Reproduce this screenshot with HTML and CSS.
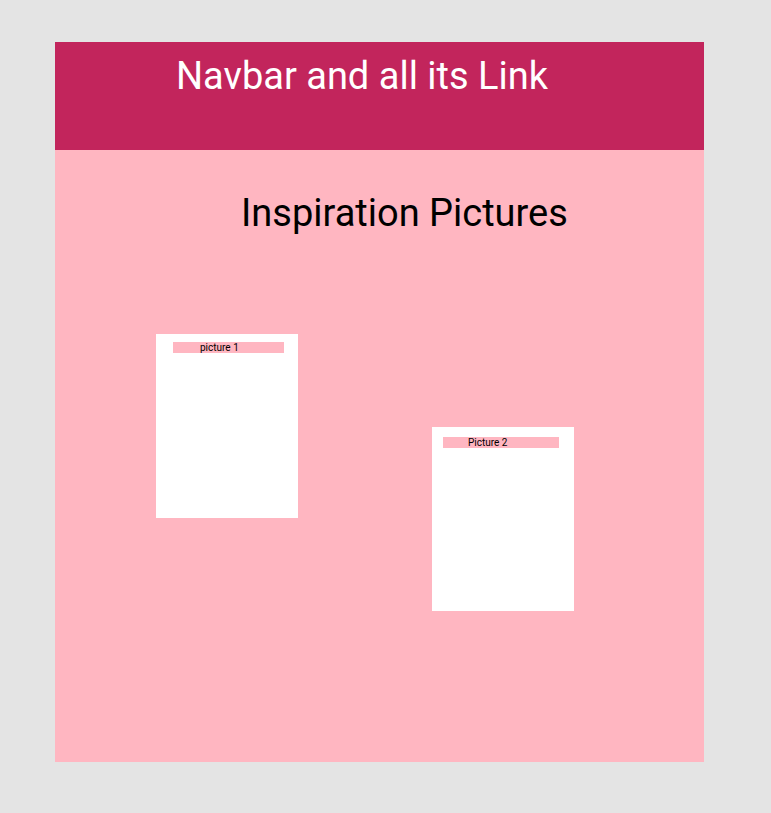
FILE: index.html
```html
<!DOCTYPE html>
<html>
<head>
<meta charset="utf-8">
<link rel="stylesheet" href="styles.css">
</head>
<body>
<div class="frame">
  <nav class="navbar"><span class="nav-text">Navbar and all its Link</span></nav>
  <main class="content">
    <h1 class="title">Inspiration Pictures</h1>
    <div class="pictures">
      <div class="card card-1"><div class="label label-1">picture 1</div></div>
      <div class="card card-2"><div class="label label-2">Picture 2</div></div>
    </div>
  </main>
</div>
</body>
</html>
```

FILE: styles.css
```css
html, body {
  margin: 0;
  padding: 0;
  background: #e4e4e4;
  font-family: Roboto, "Noto Sans", sans-serif;
}
.frame {
  margin: 42px 0 0 55px;
  width: 649px;
  height: 720px;
  background: #ffb6c1;
  display: flex;
  flex-direction: column;
}
.navbar {
  height: 108px;
  background: #c2255c;
  color: #fff;
  box-sizing: border-box;
  padding: 14px 0 0 121px;
}
.nav-text {
  font-size: 38px;
  line-height: 40px;
}
.content {
  flex: 1;
}
.title {
  margin: 0;
  padding: 43px 0 0 186px;
  font-weight: 400;
  font-size: 38px;
  line-height: 40px;
  color: #000;
}
.pictures {
  display: flex;
  align-items: flex-start;
  padding: 101px 0 0 101px;
}
.card {
  width: 142px;
  height: 184px;
  background: #fff;
  box-sizing: border-box;
}
.card-1 { padding: 8px 14px 0 17px; }
.card-2 { margin: 93px 0 0 134px; padding: 10px 15px 0 11px; }
.label {
  background: #ffb6c1;
  height: 11px;
  font-size: 10px;
  line-height: 12px;
  color: #000;
}
.label-1 { width: 111px; padding-left: 27px; box-sizing: border-box; }
.label-2 { width: 116px; padding-left: 25px; box-sizing: border-box; }
```
